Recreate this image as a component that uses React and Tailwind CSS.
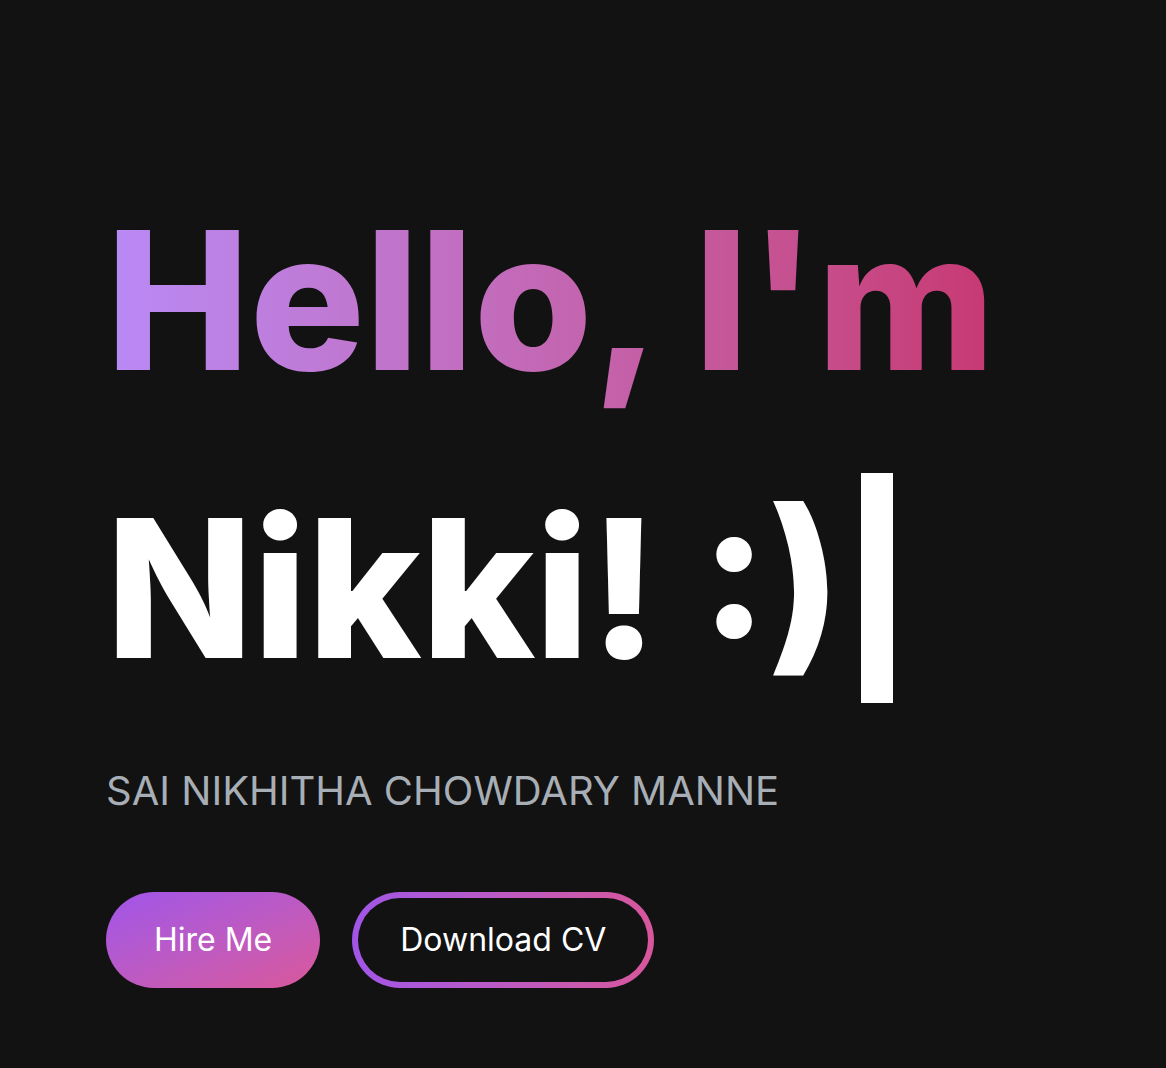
export default function App() {
  return (
    <div
      className="min-h-[1068px] w-full bg-[#121212] pl-[106px] pt-[156px] text-white"
      style={{ fontFamily: "Inter, 'Liberation Sans', sans-serif" }}
    >
      <h1 className="text-[192px] font-extrabold leading-[288px]">
        <span className="inline-block bg-gradient-to-r from-[#b98af6] to-[#c73872] bg-clip-text text-transparent">
          Hello, I'm
        </span>
        <div className="flex items-center">
          <span>Nikki! :)</span>
          <span className="ml-[20px] inline-block h-[230px] w-[32px] bg-white" />
        </div>
      </h1>
      <p className="mt-[29px] text-[40px] leading-[60px] text-[#a8aeb5]">
        SAI NIKHITHA CHOWDARY MANNE
      </p>
      <div className="mt-[71px] flex gap-[32px]">
        <button className="h-[96px] rounded-full bg-gradient-to-br from-[#a054ea] to-[#da579a] px-[48px] text-[32px] leading-[48px] text-white">
          Hire Me
        </button>
        <div className="h-[96px] rounded-full bg-gradient-to-r from-[#a155e8] to-[#d8569b] p-[6px]">
          <button className="h-full rounded-full bg-[#121212] px-[42px] text-[32px] leading-[48px] text-white">
            Download CV
          </button>
        </div>
      </div>
    </div>
  );
}
